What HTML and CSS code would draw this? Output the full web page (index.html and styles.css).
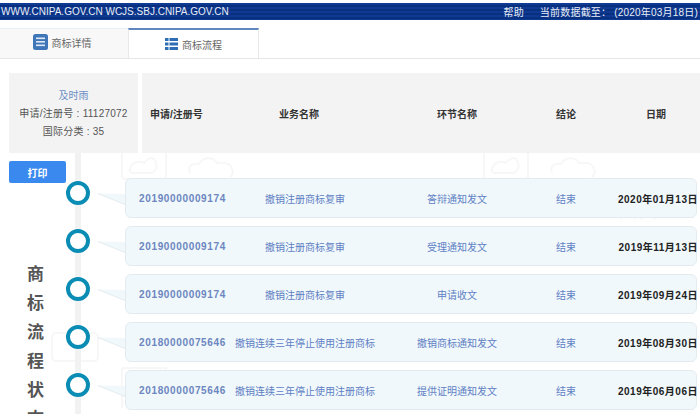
FILE: index.html
```html
<!DOCTYPE html>
<html lang="zh-CN">
<head>
<meta charset="utf-8">
<title>商标流程</title>
<link rel="stylesheet" href="styles.css">
</head>
<body>
<div class="page">
  <header class="topbar">
    <span class="site">WWW.CNIPA.GOV.CN WCJS.SBJ.CNIPA.GOV.CN</span>
    <span class="meta"><span class="help">帮助</span><span>当前数据截至： (2020年03月18日)</span></span>
  </header>
  <nav class="tabs">
    <div class="tab tab-off">
      <svg class="ico" width="15" height="16" viewBox="0 0 15 16"><rect x="0" y="0" width="15" height="16" rx="2.5" fill="#3f76b8"/><rect x="3" y="3.5" width="9" height="1.6" fill="#dfe9f5"/><rect x="3" y="7" width="9" height="1.6" fill="#dfe9f5"/><rect x="3" y="10.5" width="9" height="1.6" fill="#dfe9f5"/></svg>
      <span>商标详情</span>
    </div>
    <div class="tab tab-on">
      <svg class="ico" width="13" height="12" viewBox="0 0 13 12"><g fill="#2f6db5"><rect width="3.5" height="3"/><rect x="4.5" width="8.5" height="3"/><rect y="4.5" width="3.5" height="3"/><rect x="4.5" y="4.5" width="8.5" height="3"/><rect y="9" width="3.5" height="3"/><rect x="4.5" y="9" width="8.5" height="3"/></g></svg>
      <span>商标流程</span>
    </div>
  </nav>
  <main class="content">
    <svg class="mark" width="700" height="261" viewBox="0 0 700 261" fill="none" stroke="#f7f7f7" stroke-width="2">
      <rect x="122" y="-8" width="44" height="34" rx="3"/><path d="M130 16c2-8 10-8 14-6 4-5 10-8 12 0 2 5-1 9-5 10h-18c-3 0-4-2-3-4zM166-4v30"/><path d="M190 20c-3-8 4-10 9-9 4-7 14-8 18-1 6-1 14 0 15 6 2 3 0 6-2 8"/>
      <rect x="484" y="-8" width="44" height="34" rx="3"/><path d="M492 16c2-8 10-8 14-6 4-5 10-8 12 0 2 5-1 9-5 10h-18c-3 0-4-2-3-4zM528-4v30"/><path d="M552 20c-3-8 4-10 9-9 4-7 14-8 18-1 6-1 14 0 15 6 2 3 0 6-2 8"/>
      <rect x="52" y="180" width="46" height="28" rx="4"/><path d="M122 215v40M122 215h44v40"/>
      <path d="M620 66l8-5 8 5M640 66l8-5 8 5"/>
    </svg>
    <section class="head">
      <div class="info">
        <div class="brand">及时雨</div>
        <div class="spaced">申请/注册号 : 11127072</div>
        <div class="spaced">国际分类 : 35</div>
      </div>
      <div class="cols">
        <div class="c1">申请/注册号</div>
        <div class="c2">业务名称</div>
        <div class="c3">环节名称</div>
        <div class="c4">结论</div>
        <div class="c5">日期</div>
      </div>
    </section>
    <section class="flow">
      <aside class="side">
        <button class="print">打印</button>
        <div class="title">商标流程状态</div>
      </aside>
      <div class="track">
        <article class="row">
          <span class="dot"></span><svg class="tail" width="28" height="13" viewBox="0 0 28 13"><path d="M0 .5L28 1V12Z" fill="#f1f8fb"/><path d="M0 .5L28 12" stroke="#e4ebee" fill="none"/></svg>
          <div class="card"><div class="c1 num">20190000009174</div><div class="c2">撤销注册商标复审</div><div class="c3">答辩通知发文</div><div class="c4">结束</div><div class="c5">2020年01月13日</div></div>
        </article>
        <article class="row">
          <span class="dot"></span><svg class="tail" width="28" height="13" viewBox="0 0 28 13"><path d="M0 .5L28 1V12Z" fill="#f1f8fb"/><path d="M0 .5L28 12" stroke="#e4ebee" fill="none"/></svg>
          <div class="card"><div class="c1 num">20190000009174</div><div class="c2">撤销注册商标复审</div><div class="c3">受理通知发文</div><div class="c4">结束</div><div class="c5">2019年11月13日</div></div>
        </article>
        <article class="row">
          <span class="dot"></span><svg class="tail" width="28" height="13" viewBox="0 0 28 13"><path d="M0 .5L28 1V12Z" fill="#f1f8fb"/><path d="M0 .5L28 12" stroke="#e4ebee" fill="none"/></svg>
          <div class="card"><div class="c1 num">20190000009174</div><div class="c2">撤销注册商标复审</div><div class="c3">申请收文</div><div class="c4">结束</div><div class="c5">2019年09月24日</div></div>
        </article>
        <article class="row">
          <span class="dot"></span><svg class="tail" width="28" height="13" viewBox="0 0 28 13"><path d="M0 .5L28 1V12Z" fill="#f1f8fb"/><path d="M0 .5L28 12" stroke="#e4ebee" fill="none"/></svg>
          <div class="card"><div class="c1 num">20180000075646</div><div class="c2">撤销连续三年停止使用注册商标</div><div class="c3">撤销商标通知发文</div><div class="c4">结束</div><div class="c5">2019年08月30日</div></div>
        </article>
        <article class="row">
          <span class="dot"></span><svg class="tail" width="28" height="13" viewBox="0 0 28 13"><path d="M0 .5L28 1V12Z" fill="#f1f8fb"/><path d="M0 .5L28 12" stroke="#e4ebee" fill="none"/></svg>
          <div class="card"><div class="c1 num">20180000075646</div><div class="c2">撤销连续三年停止使用注册商标</div><div class="c3">提供证明通知发文</div><div class="c4">结束</div><div class="c5">2019年06月06日</div></div>
        </article>
      </div>
    </section>
  </main>
</div>
</body>
</html>
```
FILE: styles.css
```css
* { box-sizing: border-box; }
html, body { margin: 0; padding: 0; background: #fff; }
body { font-family: "Liberation Sans", "Noto Sans CJK SC", sans-serif; font-size: 10px; color: #333; }
.page { width: 700px; height: 414px; overflow: hidden; padding-top: 3px; }

.topbar {
  height: 17px; display: flex; justify-content: space-between; align-items: center;
  padding: 0 2px 0 1px; color: #e8eef8; font-size: 10px;
  background: repeating-linear-gradient(to bottom, #0f3a93 0, #0f3a93 2px, #08307f 2px, #08307f 4px);
}
.site { font-size: 10px; }
.meta { display: flex; gap: 16px; letter-spacing: 0.2px; }

.tabs { height: 31px; margin-top: 8px; display: flex; border-bottom: 1px solid #e6e6e6; }
.tab { display: flex; align-items: center; justify-content: center; gap: 4px; color: #666; font-size: 10px; }
.tab-off { width: 128px; background: #f8f8f8; border-top: 1px solid #eaeef5; padding: 0 4px 3px 0; }
.tab-on { width: 131px; background: #fff; border-top: 2px solid #5f87bd; border-left: 1px solid #e8e8e8; border-right: 1px solid #e8e8e8; }

.content { position: relative; padding: 14px 3px 0 9px; }
.mark { position: absolute; left: 0; top: 94px; }
.head { position: relative; display: flex; gap: 4px; height: 80px; }
.info { flex: none; width: 129px; background: #f3f3f3; display: flex; flex-direction: column; align-items: center; justify-content: center; line-height: 18px; color: #555; padding-top: 1px; }
.spaced { letter-spacing: 0.25px; }
.brand { color: #6d8fc4; }
.cols { flex: none; width: 558px; background: #f3f3f3; display: flex; align-items: center; font-weight: bold; color: #333; }

.cols .c1 { width: 80px; padding-left: 8px; white-space: nowrap; }
.cols .c2 { width: 154px; text-align: center; }
.cols .c3 { width: 162px; text-align: center; }
.cols .c4 { width: 56px; text-align: center; }
.cols .c5 { width: 106px; padding-left: 52px; }

.flow { position: relative; display: flex; }
.side { flex: none; width: 57px; padding-top: 8px; }
.print { display: block; width: 57px; height: 22px; border: 0; border-radius: 2px; background: #3a89ee; color: #fff; font: bold 10px "Liberation Sans", "Noto Sans CJK SC", sans-serif; padding: 0; }
.title { width: 18px; margin: 77px 0 0 18px; font-size: 17px; font-weight: bold; line-height: 29px; color: #555; }

.track { position: relative; flex: 1; padding: 25px 0 0 59px; display: flex; flex-direction: column; gap: 8px; }
.track::before { content: ""; position: absolute; left: 9px; top: 0; bottom: -40px; width: 6px; background: #f2f2f2; }
.row { position: relative; height: 40px; }
.dot { position: absolute; left: -59px; top: 3px; width: 24px; height: 24px; border-radius: 50%; background: #fff; border: 4px solid #0b8cb4; }
.tail { position: absolute; left: -27px; top: 15px; }
.card { height: 40px; display: flex; align-items: center; background: #f0f8fb; border: 1px solid #e4ebee; border-radius: 6px; color: #5f80c4; position: relative; }
.card .c1 { flex: none; width: 94px; padding-left: 13px; white-space: nowrap; }
.num { font-weight: bold; color: #6c86bf; letter-spacing: 0.65px; }
.card .c2 { flex: none; width: 170px; text-align: center; white-space: nowrap; }
.card .c3 { flex: none; width: 134px; text-align: center; white-space: nowrap; }
.card .c4 { flex: none; width: 84px; text-align: center; }
.card .c5 { flex: 1; color: #222; font-weight: bold; text-align: right; margin-right: -2px; letter-spacing: 0.5px; white-space: nowrap; }
```
